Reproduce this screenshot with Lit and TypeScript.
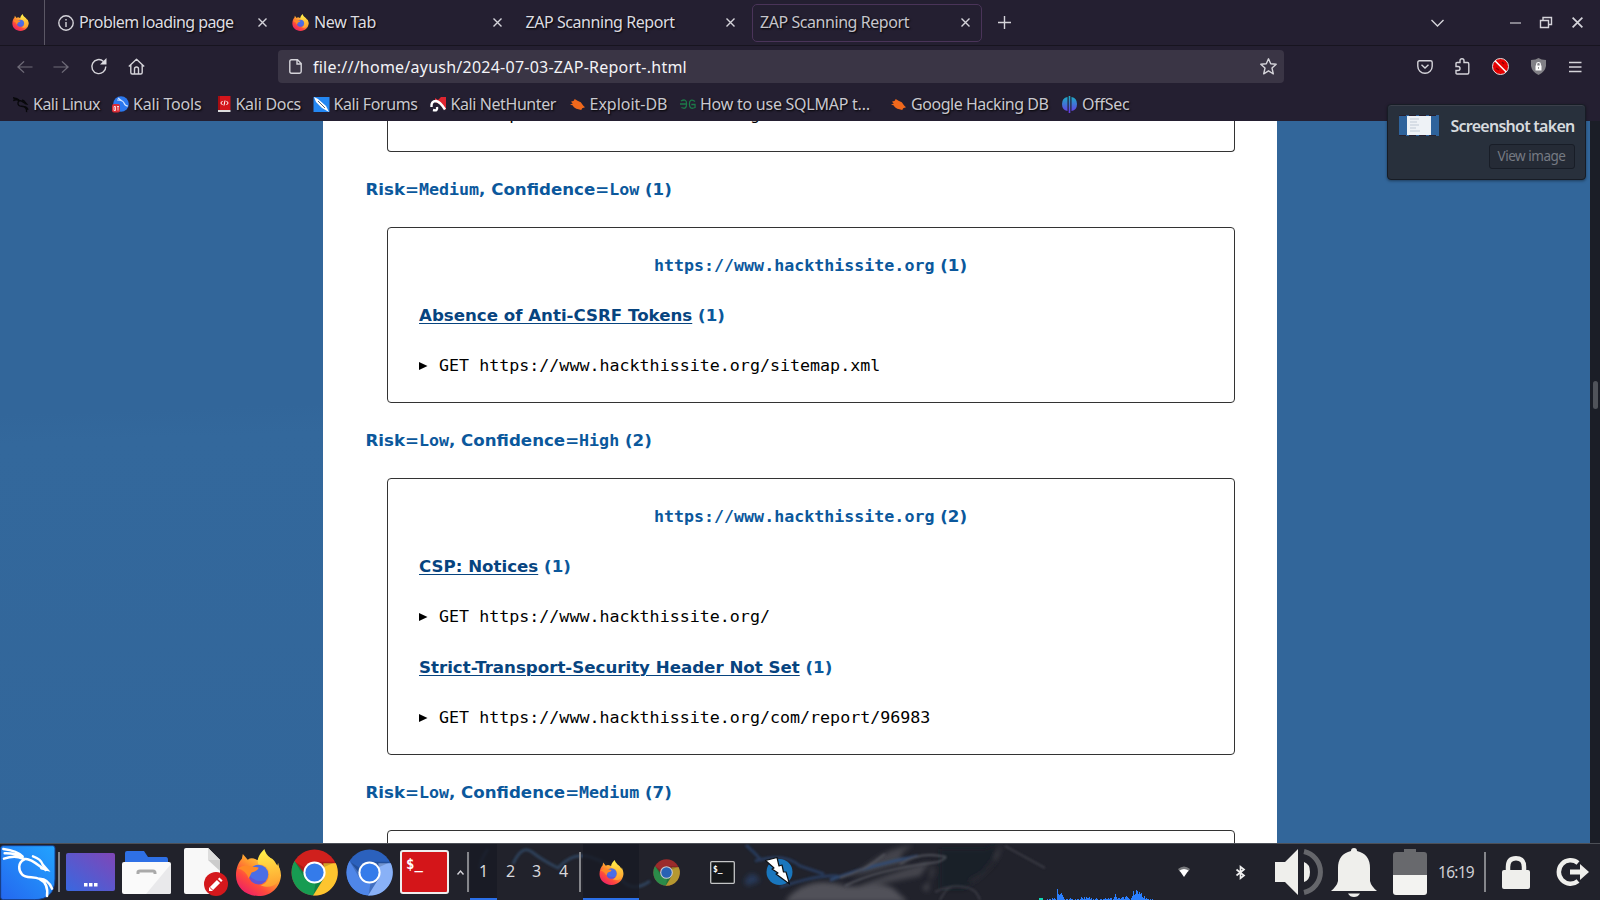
import { LitElement, html, svg, css } from "lit";
import { customElement, property } from "lit/decorators.js";

/** A single line of text whose tracking is tuned so it spans a given width. */
@customElement("fit-text")
class FitText extends LitElement {
  static styles = css`
    :host { display: inline-block; white-space: pre; }
    .run { display: inline-block; white-space: pre; }
  `;
  @property() text = "";
  @property({ type: Number }) span = 0;

  render() {
    return html`<span class="run">${this.text}</span>`;
  }
  firstUpdated() {
    const run = this.renderRoot.querySelector(".run") as HTMLElement;
    const natural = run.getBoundingClientRect().width;
    if (this.span && natural) {
      run.style.letterSpacing = `${(this.span - natural) / this.text.length}px`;
    }
  }
}

const fit = (text: string, span: number) => html`<fit-text .text=${text} .span=${span}></fit-text>`;

const icon = (w: number, h: number, box: string, body: unknown) =>
  html`<svg class="ic" width=${w} height=${h} viewBox=${box} preserveAspectRatio="none">${body}</svg>`;

const firefox = (size: number) => icon(size, size, "0 0 48 48", svg`
  <defs>
    <linearGradient id="fxo" x1="0.85" y1="0.1" x2="0.2" y2="0.95">
      <stop offset="0" stop-color="#ffe14a"/><stop offset=".4" stop-color="#ff9a2e"/>
      <stop offset=".7" stop-color="#ff4a3c"/><stop offset="1" stop-color="#ec2067"/>
    </linearGradient>
    <linearGradient id="fxf" x1="0.5" y1="0" x2="0.6" y2="1">
      <stop offset="0" stop-color="#fff04a"/><stop offset="1" stop-color="#ff9f30"/>
    </linearGradient>
  </defs>
  <path fill="url(#fxo)" d="M1 27C1 19 4 13 7 10L8 5L13 11Q17 8 22 11L28 12Q34 4 40 14Q47 18 47 27C46 39 37 48 24 48C11 48 1 39 1 27Z"/>
  <path fill="url(#fxf)" d="M30 0C24 6 22 11 24 16C31 15 36 21 35 28C33 34 30 36 26 37C39 42 47 34 46 23L44 14L43 18Q41 11 36 9Q31 5 30 0Z"/>
  <circle cx="24" cy="26" r="10" fill="#4a6ee6"/>
  <path fill="#7542c5" opacity=".6" d="M14 26a10 10 0 0 0 18 6Q20 35 14 26Z"/>
  <path fill="#ff8a26" d="M3 20Q8 16 13 17L24 19Q24 22 17 24Q15 28 14 30Q11 22 3 20Z"/>`);

const chrome = (size: number, c: string[]) => icon(size, size, "0 0 48 48", svg`
  <circle cx="24" cy="24" r="23.5" fill=${c[0]}/>
  <path fill=${c[1]} d="M3.6 12.3A23.5 23.5 0 0 0 24 47.5L34 29L24 24H13Z"/>
  <path fill=${c[2]} d="M45.8 14.5A23.5 23.5 0 0 1 22.5 47.5L34 29L33 14.5Z"/>
  <path fill="#000" opacity=".17" d="M24 13H46L33 19ZM4 13L14 30L15 20ZM23 47L34 29L25 35Z"/>
  <circle cx="24" cy="24" r="11.3" fill=${c[4]}/><circle cx="24" cy="24" r="9.3" fill=${c[3]}/>`);

const closeX = (s = 9) => icon(s, s, "0 0 9 9", svg`<path class="ln" d="M.5 .5L8.500 8.500M8.500 .5L.5 8.500"/>`);

const kaliMark = svg`
  <path d="M10 15Q52 20 68 38M14 28Q48 27 68 42M12 44Q45 32 68 44C95 42 114 65 136 78M99 37Q123 45 128 62L141 77L124 73"/>
  <path d="M72 47C53 56 55 80 66 91C78 104 101 96 119 105C136 113 144 131 141 156M119 104Q145 105 156 134"/>`;

const bug = icon(15, 13, "0 0 16 14", svg`<path fill="#f0681c" d="M1 4L4 3L5 1L8 3Q12 4 14 8L16 10L13 11L12 13L9 12Q4 11 3 8L0 7L3 6Z"/>`);

const BOOKMARKS = [
  { w: 100, label: "Kali Linux", span: 67, pic: icon(17, 17, "0 0 165 165", svg`<g fill="none" stroke="#08080b" stroke-width="13">${kaliMark}</g>`) },
  { w: 102.500, label: "Kali Tools", span: 68.5, pic: icon(17, 17, "0 0 17 17", svg`
      <circle cx="9" cy="8" r="7.8" fill="#2c78ee"/><path d="M5 4Q11 4 12 7T16 10M6 2L10 5" fill="none" stroke="#cde2ff" stroke-width="1.2"/>
      <rect x="0" y="8" width="8" height="8.5" rx="2" fill="#d92b35"/><path d="M2 10.5h1.5v4H2zM5 10.5h2M6 10.5v4" stroke="#fff" fill="none" stroke-width=".8"/>`) },
  { w: 98, label: "Kali Docs", span: 65.5, pic: icon(15, 17, "0 0 15 17", svg`
      <path fill="#d4151b" d="M2 0H14.500V14H2z"/><path fill="#a50d12" d="M2 0h2v14H2z"/><path fill="#ddd" d="M2 14h12.500v2H2z"/>
      <path d="M6.500 5L4.800 7L6.500 9M10.500 5L12.200 7L10.500 9M9 4.500L8 9.500" fill="none" stroke="#fff"/>`) },
  { w: 117, label: "Kali Forums", span: 84, pic: icon(17, 17, "0 0 17 17", svg`
      <rect x=".5" y="1" width="16" height="15" fill="#2487f2"/><path d="M1 1L5 3L13 10L16 16L9 12L3 6Z" fill="#fff"/><path d="M5 5L12 12" stroke="#5b6470"/>`) },
  { w: 139, label: "Kali NetHunter", span: 105.5, pic: icon(17, 17, "0 0 17 17", svg`
      <path fill="#de2530" d="M5 2L8 4L11 1H16V14L12 9L5 6Z"/><path d="M1.500 11Q1 5 6 5Q10 5.500 15 13.500M3 14Q8 15.500 7 11" fill="none" stroke="#fff" stroke-width="2.400"/>`) },
  { w: 110.500, label: "Exploit-DB", span: 78, pic: bug },
  { w: 211, label: "How to use SQLMAP t…", span: 170, pic: icon(16, 11, "0 0 17 11", svg`
      <path d="M1 2Q7-1 7 5T1.500 8.500M0 5H7M16 2.500Q10-1 10 5T16 8.500V5.500H12" fill="none" stroke="#1c7a48" stroke-width="1.300"/>`) },
  { w: 171, label: "Google Hacking DB", span: 137.5, pic: bug },
  { w: 80, label: "OffSec", span: 47.5, pic: icon(15, 17, "0 0 15 17", svg`
      <defs><linearGradient id="os" x1="0" y1="0" x2="0" y2="1"><stop offset="0" stop-color="#18b2c4"/><stop offset="1" stop-color="#6b35e8"/></linearGradient></defs>
      <path fill="url(#os)" d="M5.500 1Q0 2 0 8T5.500 15ZM9.500 1Q15 2 15 8T9.500 15ZM6.700 0H8.300V17H6.700Z"/>`) },
];

const GRAPH = [1,0,1,1,0,2,1,2,1,0,11,6,5,6,7,5,3,1,0,1,1,0,1,2,1,1,0,0,1,0,1,1,0,1,3,2,1,3,1,3,2,2,3,1,2,0,1,0,1,2,1,0,0,1,1,0,1,1,2,1,1,2,1,2,2,0,1,3,6,3,1,2,2,1,2,3,3,1,3,4,3,2,1,0,2,4,9,5,6,10,9,6,8,6,7,3,2,4,1,2,1,1,0,1,0,1];

interface Finding { name: string; url: string; }
interface Group { risk: string; conf: string; total: number; site?: number; findings: Finding[]; }
const GROUPS: Group[] = [
  { risk: "Medium", conf: "Low", total: 1, site: 1, findings: [
    { name: "Absence of Anti-CSRF Tokens", url: "https://www.hackthissite.org/sitemap.xml" }] },
  { risk: "Low", conf: "High", total: 2, site: 2, findings: [
    { name: "CSP: Notices", url: "https://www.hackthissite.org/" },
    { name: "Strict-Transport-Security Header Not Set", url: "https://www.hackthissite.org/com/report/96983" }] },
  { risk: "Low", conf: "Medium", total: 7, findings: [] },
];

@customElement("app-root")
class AppRoot extends LitElement {
  static styles = css`
    :host {
      display: flex; flex-direction: column; position: relative; width: 1600px; height: 900px; overflow: hidden;
      font-family: "Noto Sans", sans-serif; font-size: 16px; line-height: 1.2; color: #dddce1; background: #241f31;
    }
    * { box-sizing: border-box; }
    .ic { display: block; flex: none; overflow: visible; }
    .ln { fill: none; stroke: #d5d4da; stroke-width: 1.4; }
    .tabs { height: 46px; flex: none; display: flex; align-items: center; border-bottom: 1px solid #17141f; text-shadow: 1px 1px 2px #000; }
    .pin { width: 45px; height: 45px; display: flex; align-items: center; justify-content: center; border-right: 1px solid #5b5765; padding-right: 3px; }
    .tab { width: 234.500px; height: 38px; display: flex; align-items: center; padding: 0 10.500px 0 12px; gap: 5px; border: 1px solid transparent; border-radius: 5px; }
    .grow { flex: 1; }
    .first { width: 234px; padding-right: 11.500px; }
    .third { padding-left: 3px; margin-left: 8px; width: 225px; }
    .active { width: 230px; border-color: #4a3459; padding: 0 11px 0 7.500px; margin-left: 5px; color: #c6c5cc; }
    .plus { margin-left: 16px; }
    .win { display: flex; align-items: center; }
    .w1 { margin-right: 66px; } .w2 { margin-right: 19px; } .w3 { margin-right: 20px; } .w4 { margin-right: 17px; }
    .nav { height: 41px; flex: none; display: flex; align-items: center; line-height: 1; }
    .tools { width: 278px; display: flex; padding-left: 16.500px; gap: 20.500px; align-items: center; }
    .dim { opacity: .42; }
    .url { width: 1006px; height: 33px; background: #3a3545; border-radius: 4px; display: flex; align-items: center; padding: 0 7px 0 10.500px; gap: 11.500px; color: #f3f3f7; }
    .ext { flex: 1; display: flex; align-items: center; justify-content: space-between; padding: 0 19px 0 132.500px; }
    .marks { height: 34px; flex: none; display: flex; align-items: center; padding: 0 0 0 12px; color: #c9c8cf; text-shadow: 1px 1px 2px #000; line-height: 1; }
    .mark { display: flex; align-items: center; gap: 4px; }
    .holder { width: 17px; display: flex; justify-content: center; }
    .view { height: 722px; flex: none; display: flex; overflow: hidden; background: #32669a; }
    .gutter { width: 322.500px; flex: none; background: linear-gradient(178deg, #32669a 40%, #33689c 44%, #32669a 100%); }
    .page { width: 954.500px; flex: none; background: #fff; padding: 0 42.500px 0 43px; color: #000;
      font: 16.650px/50.200px "DejaVu Sans", sans-serif; display: flex; flex-direction: column; }
    .side { width: 313px; flex: none; }
    .track { width: 10px; background: #1b1e27; padding: 260px 0 0 3px; flex: none; }
    .thumb { width: 5px; height: 28px; border-radius: 3px; background: #50535a; }
    .mono { font-family: "DejaVu Sans Mono", monospace; }
    .title { height: 75px; flex: none; line-height: 75px; font-weight: 700; color: #0b589c; }
    .card { margin: 0 0 0 21px; width: 848px; flex: none; border: 1px solid #333; border-radius: 4px; padding: 12.700px 31.500px 11px; }
    .cut { height: 31px; border-top: 0; border-radius: 0 0 4px 4px; padding-top: 0; padding-bottom: 0; }
    .cut .req { margin-top: -31px; }
    .site, .alert { height: 50.200px; font-weight: 700; color: #0b589c; white-space: pre; }
    .site { text-align: center; }
    .link { color: #07447f; text-decoration: underline; text-decoration-thickness: 1px; text-underline-offset: 2px; }
    .req { height: 50.200px; display: flex; align-items: center; gap: 11.500px; white-space: pre; font-size: 16.670px; }
    .open { height: 40px; flex: none; }
    .toast { position: absolute; left: 1387px; top: 103.500px; width: 199px; height: 76px; border-radius: 4px; background: #28303c;
      border: 1px solid #171c25; box-shadow: 0 1px 3px #0006, inset 0 1px #3b3f4a; padding: 10px 10.500px 10px 11px; line-height: 1;
      display: flex; flex-direction: column; justify-content: space-between; }
    .trow { display: flex; justify-content: space-between; align-items: center; font-weight: 600; height: 22px; color: #d6dade; }
    .btn { align-self: flex-end; width: 86px; height: 25px; border: 1px solid #181d27; border-radius: 3px; background: #252b36; color: #757a83; font-size: 13.500px; padding-top: 1px; display: flex; align-items: center; justify-content: center; }
    .bar { position: relative; height: 57px; flex: none; background: #21222b; border-top: 1px solid #4d5057; display: flex; align-items: center; }
    .smoke { position: absolute; left: 0; top: 0; }
    .slot { height: 56px; display: flex; align-items: center; justify-content: center; flex: none; z-index: 1; }
    .sep { width: 2px; height: 40px; background: #85868b; flex: none; z-index: 1; }
    .ws { font-size: 16px; color: #d8d8dc; }
    .sel { background: #181a24cc; border-bottom: 2px solid #2a6fe8; padding-top: 2px; }
    .graph { display: flex; align-items: flex-end; height: 56px; width: 106px; flex: none; z-index: 1; }
    .gbar { width: 1px; background: #2a7fff; }
    .dot { width: 4px; height: 2px; background: #12d8b4; align-self: flex-end; flex: none; z-index: 1; }
    .clock { width: 36px; margin-left: -4px; font-size: 15.500px; color: #d0d0d4; }
  `;

  tabStrip() {
    return html`<div class="tabs">
      <div class="pin">${firefox(17)}</div>
      <div class="tab first">
        ${icon(16, 16, "0 0 16 16", svg`<circle class="ln" cx="8" cy="8" r="7.2"/><path class="ln" d="M8 7V12M8 4V5.500"/>`)}
        ${fit("Problem loading page", 154.5)}<div class="grow"></div>${closeX()}
      </div>
      <div class="tab">${firefox(17)}${fit("New Tab", 62)}<div class="grow"></div>${closeX()}</div>
      <div class="tab third">${fit("ZAP Scanning Report", 149)}<div class="grow"></div>${closeX()}</div>
      <div class="tab active">${fit("ZAP Scanning Report", 149)}<div class="grow"></div>${closeX()}</div>
      <div class="plus">${icon(13, 13, "0 0 13 13", svg`<path class="ln" d="M6.500 0V13M0 6.500H13"/>`)}</div>
      <div class="grow"></div>
      <div class="win">
        <div class="w1">${icon(13, 8, "0 0 13 8", svg`<path class="ln" d="M.5 1L6.500 7L12.500 1"/>`)}</div>
        <div class="w2">${icon(11, 2, "0 0 11 2", svg`<path class="ln" d="M0 1H11" opacity=".8"/>`)}</div>
        <div class="w3">${icon(12, 11, "0 0 12 11", svg`<path class="ln" d="M.5 3.500H8.500V10.500H.5ZM3 3V.5H11.500V7.500H9"/>`)}</div>
        <div class="w4">${closeX(11)}</div>
      </div>
    </div>`;
  }

  navBar() {
    return html`<div class="nav">
      <div class="tools">
        <div class="dim">${icon(16, 14, "0 0 17 16", svg`<path class="ln" d="M16.500 8H1.500M7.500 1.500L1 8L7.500 14.500"/>`)}</div>
        <div class="dim">${icon(16, 14, "0 0 17 16", svg`<path class="ln" d="M.5 8H15.500M9.500 1.500L16 8L9.500 14.500"/>`)}</div>
        ${icon(18, 17, "0 0 18 17", svg`<path class="ln" d="M15.800 8.500A7 7 0 1 1 13.500 3.400"/><path fill="#dddce2" d="M16.500 0V6.500H10Z"/>`)}
        ${icon(17, 17, "0 0 17 17", svg`<path class="ln" stroke-linejoin="round" d="M.8 8.500L8.500 1.200L16.200 8.500M2.800 7V14.500Q2.800 16 4.300 16H12.700Q14.200 16 14.200 14.500V7M6.500 16V11Q6.500 9 8.500 9T10.500 11V16"/>`)}
      </div>
      <div class="url">
        ${icon(13, 15, "0 0 13 15", svg`<path class="ln" d="M2.500 .8H8.500L12.200 4.500V12.500Q12.200 14.200 10.500 14.200H2.500Q.8 14.200 .8 12.500V2.500Q.8 .8 2.500 .8ZM8 1V5H12"/>`)}
        ${fit("file:///home/ayush/2024-07-03-ZAP-Report-.html", 374)}
        <div class="grow"></div>
        ${icon(17, 17, "0 0 17 17", svg`<path class="ln" stroke-linejoin="round" d="M8.500 .8L10.700 5.800L16.200 6.300L12 10L13.300 15.800L8.500 12.800L3.700 15.800L5 10L.8 6.300L6.300 5.800Z"/>`)}
      </div>
      <div class="ext">
        ${icon(16, 14, "0 0 16 14", svg`<path class="ln" d="M2.500 .8H13.500Q15.200 .8 15.200 2.500V6.200A7.200 7 0 0 1 .8 6.200V2.500Q.8 .8 2.500 .8ZM4.500 4.800L8 8L11.500 4.800"/>`)}
        ${icon(15, 17, "0 0 15 17", svg`<path class="ln" d="M1 7V5.500Q1 4.500 2 4.500H5V2.800Q5 .8 7 .8T9 2.800V4.500H12.500Q13.800 4.500 13.800 6V14.500Q13.800 16 12.500 16H2Q1 16 1 15V12.500H3Q5 12.500 5 10.500T3 8.500H1Z"/>`)}
        ${icon(17, 17, "0 0 17 17", svg`<circle cx="8.500" cy="8.500" r="8" fill="#e60000" stroke="#e3dede" stroke-width="1"/><path d="M3 2.800L14.200 14" stroke="#fff" stroke-width="1.500"/><path d="M10 4l2 2M4 10l3 2" stroke="#8f0000" stroke-width="1.500"/>`)}
        ${icon(15, 17, "0 0 15 17", svg`<path fill="#818086" d="M7.500 0Q10 2 15 2V8Q14 14 7.500 17Q1 14 0 8V2Q5 2 7.500 0Z"/><path fill="#fff" d="M4.500 7.500H10.500V12.500H4.500Z"/><path fill="none" stroke="#fff" stroke-width="1.200" d="M5.700 8V6Q5.700 4.500 7.500 4.500T9.300 6V8"/><path stroke="#777" d="M7.500 9.200v1.500"/>`)}
        ${icon(12.5, 12, "0 0 13 12", svg`<path class="ln" d="M0 1.500H13M0 6H13M0 10.500H13"/>`)}
      </div>
    </div>`;
  }

  request(url: string) {
    return html`<div class="req mono">${icon(8.5, 8, "0 0 9 8", svg`<path d="M0 0L9 4L0 8Z"/>`)}<span>GET ${url}</span></div>`;
  }

  group(g: Group) {
    return html`
      <div class="title">Risk=<span class="mono">${g.risk}</span>, Confidence=<span class="mono">${g.conf}</span> (${g.total})</div>
      ${g.site
        ? html`<div class="card">
            <div class="site"><span class="mono">https://www.hackthissite.org</span> (${g.site})</div>
            ${g.findings.map((f) => html`<div class="alert"><span class="link">${f.name}</span> (1)</div>${this.request(f.url)}`)}
          </div>`
        : html`<div class="card open"></div>`}`;
  }

  taskbar() {
    const slot = (w: number, body: unknown, cls = "") => html`<div class="slot ${cls}" style="width:${w}px">${body}</div>`;
    const sep = html`<div class="sep"></div>`;
    return html`<div class="bar">
      <svg class="smoke" width="1600" height="56" viewBox="0 0 1600 56">
        <defs><filter id="soft" filterUnits="userSpaceOnUse" x="400" y="-20" width="700" height="100"><feGaussianBlur stdDeviation="2.500"/></filter>
        <filter id="fine" filterUnits="userSpaceOnUse" x="400" y="-20" width="700" height="100"><feGaussianBlur stdDeviation="1.300"/></filter></defs>
        <g filter="url(#soft)">
          <path fill="#5b5b62" opacity=".85" d="M785 58C796 41 818 34 842 41C862 46 880 35 894 45L908 58Z"/>
          <path fill="#53535a" opacity=".7" d="M848 33C872 22 876 6 914 1C900 8 894 17 912 19C890 21 870 30 848 33Z"/>
          <path fill="#55555c" opacity=".7" d="M922 44Q938 32 932 20L928 48ZM970 35Q985 32 1002 0Q998 22 970 40ZM850 46Q890 28 930 18L920 32L890 38Z"/>
          <path fill="#28426c" opacity=".7" d="M744 38Q752 22 760 37L748 42Z"/>
          <path fill="#191b24" opacity=".6" d="M940 5H985L995 0V20L965 45H940Z"/>
        </g>
        <g filter="url(#fine)" fill="none" opacity=".85">
          <path stroke="#34506f" stroke-width="3" opacity=".8" d="M513 20Q522 0 532 8T558 24Q572 8 590 13T620 34T650 37"/>
          <path stroke="#29466f" stroke-width="3" opacity=".8" d="M746 1Q754 8 762 17M755 17Q784 8 800 22L824 30M780 43Q820 30 838 32"/>
          <path stroke="#314d77" stroke-width="3" d="M830 36Q874 20 918 12"/>
          <path stroke="#55575f" stroke-width="2" d="M840 34Q865 27 885 10M845 42Q875 26 938 18Q952 12 940 12Q920 8 900 20"/>
          <path stroke="#484a52" stroke-width="2" opacity=".7" d="M935 48Q952 40 964 43Q976 44 980 56M940 56Q946 44 952 43M1005 2L1045 24"/>
          <path stroke="#315078" stroke-width="3" opacity=".6" d="M488 5Q480 16 480 25"/>
        </g>
      </svg>
      ${slot(55, icon(55, 57, "0 0 165 171", svg`
        <defs><linearGradient id="kb" x1="1" y1="0" x2="0" y2="1"><stop offset="0" stop-color="#22a4ff"/><stop offset="1" stop-color="#2467ef"/></linearGradient></defs>
        <path fill="url(#kb)" stroke="#173f8e" stroke-width="3" d="M2 12Q2 5 10 5H158Q165 5 165 12V105Q164 167 103 167H10Q2 167 2 160Z"/>
        <g fill="none" stroke="#fff" stroke-width="7.500" stroke-linecap="round">${kaliMark}</g>`))}
      ${slot(3, "")}${sep}
      ${slot(61, icon(49, 38, "0 0 49 38", svg`
        <defs><linearGradient id="dk" x1="0" y1="1" x2="1" y2="0"><stop offset="0" stop-color="#3868e0"/><stop offset="1" stop-color="#8046b7"/></linearGradient></defs>
        <rect width="49" height="38" rx="2" fill="url(#dk)"/><path fill="#fff" d="M18 30h3.500v3.500H18zM23 30h3.500v3.500H23zM28 30h3.500v3.500H28z"/>`))}
      ${slot(51, icon(49, 43, "0 0 49 43", svg`
        <path fill="#2e70e6" d="M3 12V2Q3 0 5 0H22L26 6H44Q46 6 46 9V13H3Z"/><rect y="11" width="49" height="32" rx="2" fill="#fafafa"/>
        <path fill="#e9e9eb" d="M49 13V41Q49 43 47 43H24Z"/><path d="M16 23V21Q16 20 18 20H31Q33 20 33 22V23" stroke="#aaa" stroke-width="3" fill="none"/>`))}
      ${slot(66, icon(45, 48, "0 0 45 48", svg`
        <path fill="#f8f8f8" d="M1 2Q1 0 3 0H25L37 12V46H3Q1 46 1 44Z"/><path fill="#ccc" d="M25 0L37 12V23L25 12Z"/><path fill="#ddd" d="M25 0L37 12H25Z"/>
        <circle cx="33" cy="36" r="12" fill="#d4181c"/><path d="M28.500 40.500L35.500 33.500" stroke="#fff" stroke-width="4.500"/><path d="M36.500 32.500L38 31" stroke="#fff" stroke-width="4.500"/><path fill="#fff" d="M26 43V39L30 43Z"/>`))}
      ${slot(40, firefox(47))}
      ${slot(72, chrome(47, ["#d0201d", "#179c52", "#fdc52f", "#347bea", "#fff"]))}
      ${slot(38, chrome(47, ["#2b61bd", "#4f86e8", "#89b1f7", "#347bea", "#fff"]))}
      ${slot(72, icon(49, 44, "0 0 49 44", svg`<rect x="1" y="1" width="47" height="42" rx="2" fill="#d41519" stroke="#eee" stroke-width="2"/>
        <text x="6" y="19" font-family="DejaVu Sans Mono, monospace" font-weight="700" font-size="14" fill="#fff">$_</text>`))}
      <div class="slot">${icon(7, 5, "-3 0 7 5", svg`<path class="ln" d="M-5.500 4.500L-2.500 1L.5 4.500"/>`)}</div>
      ${sep}${slot(1, "")}
      ${slot(27, "1", "ws sel")}${slot(27, "2", "ws")}${slot(25, "3", "ws")}${slot(29, "4", "ws")}
      ${slot(1, "")}${sep}${slot(2, "")}
      ${slot(56, firefox(25), "sel")}
      ${slot(55, chrome(27, ["#9b2b2b", "#2b8b49", "#b59831", "#2862b4", "#c9cbd0"]))}
      ${slot(57, icon(25, 23, "0 0 25 23", svg`<rect x=".7" y=".7" width="23.600" height="21.600" rx="1" fill="#15171a" stroke="#c4c5c6" stroke-width="1.300"/>
        <text x="3" y="11" font-family="DejaVu Sans Mono, monospace" font-weight="700" font-size="8" fill="#fff">$_</text>`))}
      ${slot(56, icon(28, 30, "0 0 28 30", svg`<circle cx="14.500" cy="15" r="13" fill="#1976bd"/><path fill="#fff" stroke="#0c1014" stroke-width="1.200" stroke-linejoin="round" d="M.5 3.500L12 .5L14 9L17 8L18.500 15L21 15L24.500 27L11 17L13 16L7 12L9 11Z"/>`))}
      ${slot(232, "")}
      <div class="dot"></div>${slot(4, "")}
      <div class="graph">${GRAPH.map((v) => html`<div class="gbar" style="height:${v}px"></div>`)}</div>
      ${slot(61, icon(12, 12, "0 0 12 12", svg`<path fill="#77787c" d="M0 3Q6-2 12 3L10 6H2Z"/><path fill="#fff" d="M1.500 4.500Q6 1.500 10.500 4.500L6 11Z"/>`))}
      ${slot(52, icon(9, 13, "0 0 9 13", svg`<path fill="none" stroke="#f0f0f0" stroke-width="1.700" d="M.5 3.500L8 9.500L4.500 12.200V.8L8 3.500L.5 9.500"/>`))}
      ${slot(65, icon(48, 46, "0 0 48 46", svg`<path fill="#efefec" d="M0 13H10L23 0V46L10 33H0ZM29 13Q35 15 35 23T29 33Z"/><path fill="none" stroke="#65666b" stroke-width="5" d="M29 2.500A21 21 0 0 1 29 43.500"/>`))}
      ${slot(46, icon(46, 49, "0 0 46 49", svg`<path fill="#efefec" d="M20 3Q20 0 23 0T26 3Q39 6 39 20V33Q40 38 46 43H0Q6 38 7 33V20Q7 6 20 3ZM17 45.500H29Q27 49 23 49T17 45.500Z"/>`))}
      ${slot(65, icon(34, 46, "0 0 34 46", svg`<path fill="#68696d" d="M0 6Q0 3 3 3H11V0H23V3H31Q34 3 34 6V27H0Z"/><path fill="#f3f3f1" d="M0 26H34V43Q34 46 31 46H3Q0 46 0 43Z"/>`))}
      <div class="slot clock">${fit("16:19", 36)}</div>
      <div class="grow"></div>
      ${sep}
      ${slot(60, icon(28, 33, "0 0 28 33", svg`<rect y="14" width="28" height="19" rx="2" fill="#efefec"/><path fill="none" stroke="#efefec" stroke-width="4.500" d="M6 16V11Q6 2.300 14 2.300T22 11V16"/>`))}
      ${slot(54, icon(32, 28, "0 0 32 28", svg`<path fill="none" stroke="#efefec" stroke-width="4.500" d="M21 5A11.700 11.700 0 1 0 21 23"/><path fill="#efefec" d="M13 11.500H23V6L32 14L23 22V16.500H13Z"/>`))}
    </div>`;
  }

  render() {
    return html`
      ${this.tabStrip()}
      ${this.navBar()}
      <div class="marks">${BOOKMARKS.map((b) => html`<div class="mark" style="width:${b.w}px"><div class="holder">${b.pic}</div>${fit(b.label, b.span)}</div>`)}</div>
      <div class="view">
        <div class="gutter"></div>
        <div class="page">
          <div class="card cut">${this.request("https://www.hackthissite.org")}</div>
          ${GROUPS.map((g) => this.group(g))}
        </div>
        <div class="side"></div>
        <div class="track"><div class="thumb"></div></div>
      </div>
      ${this.taskbar()}
      <div class="toast">
        <div class="trow">${icon(40, 21, "0 0 40 21", svg`<rect width="40" height="21" fill="#2e639c"/><path stroke="#28202f" stroke-dasharray="7 3" d="M0 .5H40M0 20.500H40"/><rect x="8" y="1" width="24" height="19" fill="#eef2f6"/><path stroke="#aebac8" stroke-width=".7" d="M11 4h9M11 7h7M11 10h9M11 13h6M11 16h10"/>`)}${fit("Screenshot taken", 124)}</div>
        <div class="btn">${fit("View image", 68)}</div>
      </div>`;
  }
}
